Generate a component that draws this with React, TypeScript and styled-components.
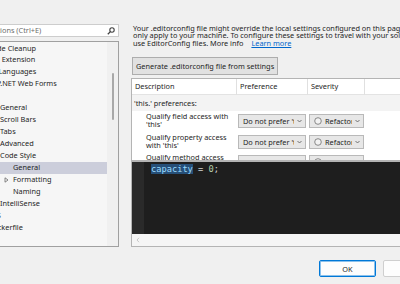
import React from "react";
import styled, { createGlobalStyle } from "styled-components";

const Global = createGlobalStyle`
  html, body { margin: 0; padding: 0; background: #f0f0f0; }
  body {
    width: 400px; height: 284px; overflow: hidden;
    font-family: "Noto Sans", "Open Sans", sans-serif;
    font-size: 7.35px; color: #1e1e1e;
  }
`;

const Window = styled.div`
  width: 400px; height: 284px; overflow: hidden;
  display: flex; flex-direction: column; background: #f0f0f0;
`;

const Main = styled.div`
  display: flex; height: 247px; flex-shrink: 0;
`;

const LeftPane = styled.div`
  flex: 0 0 121px; margin-left: -2px; padding-top: 24px;
  display: flex; flex-direction: column;
`;

const SearchBox = styled.div`
  height: 13px; box-sizing: border-box; border: 1px solid #cdcdcd; background: #fff;
  display: flex; align-items: center; justify-content: space-between;
  overflow: hidden; padding-right: 3px;
`;

const SearchText = styled.span`
  color: #6d6d6d; white-space: nowrap; margin-left: -37px; line-height: 11px;
`;

const TreeBox = styled.div`
  margin-top: 4px; height: 206px; box-sizing: border-box;
  border: 1px solid #a0a0a0; background: #f6f6f6;
  display: flex; overflow: hidden;
`;

const TreeList = styled.div`
  flex: 1; min-width: 0; margin-left: -20px; padding-top: 0.5px; overflow: hidden;
`;

const TreeRow = styled.div<{ $indent: number; $selected?: boolean }>`
  height: 11.95px; line-height: 11.95px; white-space: nowrap;
  padding-left: ${(p) => p.$indent}px; position: relative;
  background: ${(p) => (p.$selected ? "#cccedb" : "transparent")};
  display: flex; align-items: center;
`;

const Expander = styled.span`
  position: absolute; top: 0; bottom: 0; display: flex; align-items: center;
`;

const VTrack = styled.div`
  flex: 0 0 11px; background: #f0f0f0; display: flex; justify-content: center;
`;

const VThumb = styled.div`
  width: 2px; height: 47px; margin-top: 31px; background: #a8a8a8; border-radius: 1px;
`;

const RightPane = styled.div`
  flex: 0 0 300px; margin-left: 12px; padding-top: 25px;
  display: flex; flex-direction: column;
`;

const Info = styled.div`
  padding-left: 2px; line-height: 7.3px; white-space: nowrap;
`;

const Link = styled.a`
  color: #0066cc; text-decoration: underline; margin-left: 6px;
`;

const GenButton = styled.div`
  align-self: flex-start; margin: 10px 0 0 1px; height: 18px; box-sizing: border-box;
  padding: 0 3px; border: 1px solid #adadad; background: #e1e1e1;
  display: flex; align-items: center; white-space: nowrap;
`;

const TableBox = styled.div`
  margin-top: 3px; height: 83px; box-sizing: border-box;
  border: 1px solid #b4b4b4; background: #fff; overflow: hidden;
`;

const Grid = styled.div`
  display: grid; grid-template-columns: 105px 71px 57px 1fr;
`;

const HeadCell = styled.div`
  height: 16px; box-sizing: border-box; border-bottom: 1px solid #e3e3e3;
  border-right: 1px solid #e0e0e0; padding-left: 3px;
  display: flex; align-items: center; white-space: nowrap;
`;

const GroupRow = styled.div`
  grid-column: 1 / -1; height: 16px; background: #f3f3f3; padding-left: 2px;
  display: flex; align-items: center; white-space: nowrap;
`;

const DescCell = styled.div`
  height: 20.5px; padding-left: 14px; line-height: 7.9px;
  display: flex; flex-direction: column; justify-content: center; white-space: nowrap;
`;

const DropCell = styled.div`
  height: 20.5px; display: flex; align-items: center; padding-left: 1px;
`;

const Drop = styled.div<{ $w: number }>`
  width: ${(p) => p.$w}px; height: 14px; box-sizing: border-box;
  border: 1px solid #b9b9b9; background: #e7e7e7;
  display: flex; align-items: center; padding: 0 3px 0 4px; gap: 3px;
`;

const DropText = styled.span`
  flex: 1; min-width: 0; overflow: hidden; white-space: nowrap;
`;

const Preview = styled.div`
  height: 86px; box-sizing: border-box; border: 1px solid #b4b4b4;
  display: flex; flex-direction: column;
`;

const Editor = styled.div`
  flex: 0 0 72px; background: #1e1e1e; display: flex;
`;

const Gutter = styled.div`
  flex: 0 0 12px; background: #2a2a2a;
`;

const Code = styled.div`
  padding: 2px 0 0 7px;
  font-family: "DejaVu Sans Mono", "Liberation Mono", monospace;
  font-size: 8.7px; line-height: 11px; color: #d4d4d4; white-space: pre;
`;

const Sel = styled.span`
  background: #264f78; color: #9cdcfe;
`;

const Num = styled.span`
  color: #b5cea8;
`;

const HScroll = styled.div`
  flex: 1; background: #f5f5f5; display: flex; align-items: center; padding-left: 4px;
`;

const Footer = styled.div`
  width: 448px; padding: 13px 8px 0 0; box-sizing: border-box;
  display: flex; justify-content: flex-end; gap: 7px;
`;

const DlgButton = styled.div<{ $primary?: boolean }>`
  width: 57px; height: 17px; box-sizing: border-box; border-radius: 2px;
  background: #fdfdfd;
  border: 1px solid ${(p) => (p.$primary ? "#0078d7" : "#cfcfcf")};
  box-shadow: ${(p) => (p.$primary ? "inset 0 0 0 1px rgba(0,120,215,0.45)" : "none")};
  display: flex; align-items: center; justify-content: center;
`;

const Chevron = () => (
  <svg width="5" height="4" viewBox="0 0 5 4">
    <polyline points="0.5,1 2.5,3 4.5,1" fill="none" stroke="#555" strokeWidth="0.8" />
  </svg>
);

const SearchIcon = () => (
  <svg width="8" height="8" viewBox="0 0 8 8">
    <circle cx="5" cy="3" r="2.2" fill="none" stroke="#424242" strokeWidth="1.1" />
    <line x1="3.4" y1="4.6" x2="0.8" y2="7.2" stroke="#424242" strokeWidth="1.3" />
  </svg>
);

const Arrow = () => (
  <svg width="5" height="6" viewBox="0 0 5 6">
    <polygon points="1,0.8 4,3 1,5.2" fill="none" stroke="#6a6a6a" strokeWidth="0.8" />
  </svg>
);

const SevIcon = () => (
  <svg width="8" height="8" viewBox="0 0 8 8">
    <circle cx="4" cy="4" r="3.3" fill="#f2f2f2" stroke="#6f6f6f" strokeWidth="0.8" />
  </svg>
);

type Item = { text: string; level: number; selected?: boolean; arrow?: boolean };

const items: Item[] = [
  { text: "Code Cleanup", level: 1 },
  { text: "File Extension", level: 1 },
  { text: "All Languages", level: 1 },
  { text: "ASP.NET Web Forms", level: 1 },
  { text: "C#", level: 1 },
  { text: "General", level: 2 },
  { text: "Scroll Bars", level: 2 },
  { text: "Tabs", level: 2 },
  { text: "Advanced", level: 2 },
  { text: "Code Style", level: 2 },
  { text: "General", level: 3, selected: true },
  { text: "Formatting", level: 3, arrow: true },
  { text: "Naming", level: 3 },
  { text: "IntelliSense", level: 2 },
  { text: "CSS", level: 1 },
  { text: "Dockerfile", level: 1 },
];

const indentFor = (level: number) => (level === 1 ? 9 : level === 2 ? 21 : 34);

const rows = [
  ["Qualify field access with", "'this'"],
  ["Qualify property access", "with 'this'"],
  ["Qualify method access", "with 'this'"],
];

export default function App() {
  return (
    <Window>
      <Global />
      <Main>
        <LeftPane>
          <SearchBox>
            <SearchText>Search Options (Ctrl+E)</SearchText>
            <SearchIcon />
          </SearchBox>
          <TreeBox>
            <TreeList>
              {items.map((it, i) => (
                <TreeRow key={i} $indent={indentFor(it.level)} $selected={it.selected}>
                  {it.arrow && (
                    <Expander style={{ left: indentFor(it.level) - 9 }}>
                      <Arrow />
                    </Expander>
                  )}
                  {it.text}
                </TreeRow>
              ))}
            </TreeList>
            <VTrack>
              <VThumb />
            </VTrack>
          </TreeBox>
        </LeftPane>
        <RightPane>
          <Info>
            Your .editorconfig file might override the local settings configured on this page which
            <br />
            only apply to your machine. To configure these settings to travel with your solution
            <br />
            use EditorConfig files. More info <Link>Learn more</Link>
          </Info>
          <GenButton>Generate .editorconfig file from settings</GenButton>
          <TableBox>
            <Grid>
              <HeadCell>Description</HeadCell>
              <HeadCell>Preference</HeadCell>
              <HeadCell>Severity</HeadCell>
              <HeadCell />
              <GroupRow>'this.' preferences:</GroupRow>
              {rows.map((r, i) => (
                <React.Fragment key={i}>
                  <DescCell>
                    <span>{r[0]}</span>
                    <span>{r[1]}</span>
                  </DescCell>
                  <DropCell>
                    <Drop $w={68}>
                      <DropText>Do not prefer 'this.'</DropText>
                      <Chevron />
                    </Drop>
                  </DropCell>
                  <DropCell>
                    <Drop $w={55}>
                      <SevIcon />
                      <DropText>Refactoring Only</DropText>
                      <Chevron />
                    </Drop>
                  </DropCell>
                  <div />
                </React.Fragment>
              ))}
            </Grid>
          </TableBox>
          <Preview>
            <Editor>
              <Gutter />
              <Code>
                <Sel>capacity</Sel> = <Num>0</Num>;
              </Code>
            </Editor>
            <HScroll>
              <svg width="4" height="6" viewBox="0 0 4 6">
                <polyline points="3,0.8 1,3 3,5.2" fill="none" stroke="#c2c2c2" strokeWidth="0.9" />
              </svg>
            </HScroll>
          </Preview>
        </RightPane>
      </Main>
      <Footer>
        <DlgButton $primary>OK</DlgButton>
        <DlgButton>Cancel</DlgButton>
      </Footer>
    </Window>
  );
}
